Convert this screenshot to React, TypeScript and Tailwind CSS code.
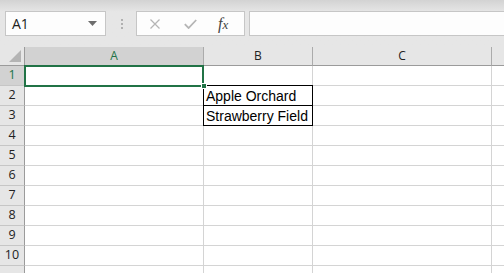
import React from "react";

const COLS = [
  { key: "A", w: "w-[179px]" },
  { key: "B", w: "w-[109px]" },
  { key: "C", w: "w-[179px]" },
  { key: "D", w: "w-[60px]" },
];

const ROWS = [1, 2, 3, 4, 5, 6, 7, 8, 9, 10, 11];

const DATA: Record<string, string> = {
  B2: "Apple Orchard",
  B3: "Strawberry Field",
};

function FormulaBar() {
  return (
    <div className="flex h-[47px] items-start bg-gradient-to-b from-[#d3d3d3] via-[#e6e6e6] via-[25%] to-[#e6e6e6] pt-[11px]">
      {/* name box */}
      <div className="ml-[5px] flex h-[25px] w-[101px] items-center justify-between border border-[#c6c6c6] bg-[#fdfdfd] pl-[6px] pr-[8px]">
        <span className="text-[14px] text-[#222]">A1</span>
        <svg width="9" height="5" viewBox="0 0 9 5">
          <path d="M0 0h9L4.5 5z" fill="#6d6d6d" />
        </svg>
      </div>

      {/* grip dots */}
      <div className="ml-[15px] mt-[8px] flex flex-col gap-[2px]">
        <span className="h-[2px] w-[2px] bg-[#b0b0b0]" />
        <span className="h-[2px] w-[2px] bg-[#b0b0b0]" />
        <span className="h-[2px] w-[2px] bg-[#b0b0b0]" />
      </div>

      {/* cancel / enter / fx */}
      <div className="ml-[13px] flex h-[25px] w-[109px] items-center border border-[#c6c6c6] bg-[#fdfdfd]">
        <svg className="ml-[13px]" width="10" height="10" viewBox="0 0 10 10">
          <path d="M0.5 0.5l9 9M9.5 0.5l-9 9" stroke="#b5b5b5" strokeWidth="1.3" />
        </svg>
        <svg className="ml-[24px]" width="13" height="10" viewBox="0 0 13 10">
          <path d="M0.8 5.2l3.8 3.8L12.2 1" stroke="#b5b5b5" strokeWidth="1.8" fill="none" />
        </svg>
        <span className="ml-[21px] font-['Liberation_Serif',serif] text-[16px] leading-none italic text-[#444]">
          f<span className="text-[13px]">x</span>
        </span>
      </div>

      {/* formula input */}
      <div className="ml-[4px] h-[25px] flex-1 border border-[#c6c6c6] border-r-0 bg-[#fdfdfd]" />
    </div>
  );
}

function Corner() {
  return (
    <div className="relative h-[19px] w-[25px] shrink-0 border-b border-r border-[#9b9b9b] bg-[#e6e6e6]">
      <svg className="absolute bottom-[3px] right-[3px]" width="12" height="12" viewBox="0 0 12 12">
        <path d="M12 0V12H0z" fill="#b4b4b4" />
      </svg>
    </div>
  );
}

export default function App() {
  return (
    <div className="h-[273px] w-[504px] overflow-hidden bg-white font-['Open_Sans',sans-serif]">
      <FormulaBar />

      <div className="relative">
        {/* column headers */}
        <div className="flex h-[19px] bg-[#e6e6e6]">
          <Corner />
          {COLS.map((c) => (
            <div
              key={c.key}
              className={`${c.w} flex shrink-0 items-center justify-center border-b border-r border-b-[#9b9b9b] border-r-[#ababab] text-[12px] ${
                c.key === "A" ? "bg-[#d2d2d2] text-[#217346]" : "text-[#222]"
              }`}
            >
              {c.key === "D" ? "" : c.key}
            </div>
          ))}
        </div>

        {/* rows */}
        {ROWS.map((r) => (
          <div key={r} className="flex h-[20px]">
            <div
              className={`flex w-[25px] shrink-0 items-center justify-center border-b border-r border-b-[#c6c6c6] border-r-[#9b9b9b] text-[12.5px] ${
                r === 1 ? "bg-[#d2d2d2] text-[#217346]" : "bg-[#e6e6e6] text-[#222]"
              }`}
            >
              {r <= 10 ? r : ""}
            </div>
            {COLS.map((c) => {
              const v = DATA[c.key + r];
              return (
                <div
                  key={c.key}
                  className={`${c.w} flex shrink-0 items-end overflow-visible whitespace-nowrap border-b border-r border-[#d4d4d4] pl-[2px] font-['Liberation_Sans',Arial,sans-serif] text-[14px] leading-[17px] text-black`}
                >
                  {v}
                </div>
              );
            })}
          </div>
        ))}

        {/* black borders around B2:B3 */}
        <div className="pointer-events-none absolute left-[203px] top-[38px] h-[41px] w-[110px] border border-black" />
        <div className="pointer-events-none absolute left-[203px] top-[58px] h-[1px] w-[110px] bg-black" />

        {/* active cell selection */}
        <div className="pointer-events-none absolute left-[24px] top-[18px] h-[22px] w-[180px] border-2 border-[#217346]" />
        <div className="pointer-events-none absolute left-[201px] top-[36px] h-[6px] w-[6px] border border-white bg-[#217346]" />
      </div>
    </div>
  );
}
